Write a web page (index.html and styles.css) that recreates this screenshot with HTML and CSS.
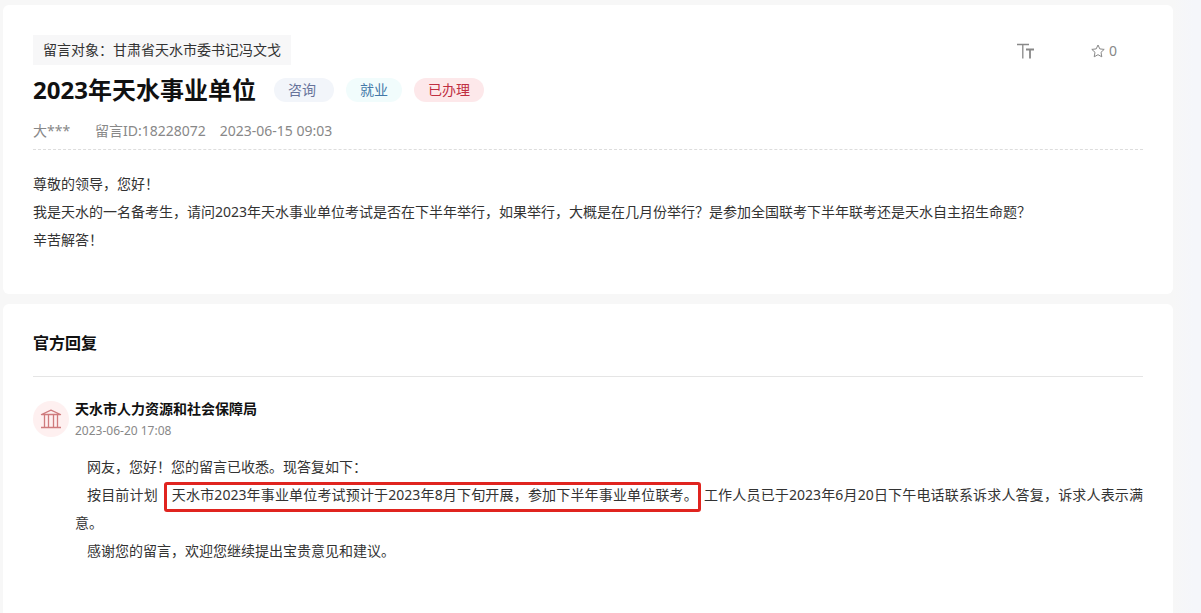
FILE: index.html
```
<!DOCTYPE html>
<html lang="zh-CN">
<head>
<meta charset="utf-8">
<meta name="viewport" content="width=device-width, initial-scale=1">
<title>2023年天水事业单位</title>
<link rel="stylesheet" href="styles.css">
</head>
<body>
<main class="page">
  <article class="card">
    <div class="card-top">
      <p class="target">留言对象：甘肃省天水市委书记冯文戈</p>
      <div class="actions">
        <button class="action" type="button" aria-label="字体大小">
          <svg width="18" height="16" viewBox="0 0 18 16" fill="none" stroke="currentColor" stroke-width="1.3" aria-hidden="true">
            <path d="M0 1.5H12M5.8 1.5V15.5"/>
            <path d="M9 6.5H17M13 6.5V15.5" stroke-width="1.8"/>
          </svg>
        </button>
        <button class="action action-star" type="button" aria-label="收藏 0">
          <svg width="14" height="14" viewBox="0 0 14 14" fill="none" stroke="currentColor" stroke-linejoin="round" aria-hidden="true">
            <path d="M7 1L8.8 4.9L13.2 5.4L10 8.3L10.8 12.8L7 10.7L3.2 12.8L4 8.3L.8 5.4L5.2 4.9Z"/>
          </svg>
          <span>0</span>
        </button>
      </div>
    </div>
    <div class="title-row">
      <h1 class="title">2023年天水事业单位</h1>
      <div class="tags">
        <span class="tag tag-type">咨询</span>
        <span class="tag tag-field">就业</span>
        <span class="tag tag-status">已办理</span>
      </div>
    </div>
    <div class="meta">
      <span class="author">大***</span>
      <span>留言ID:18228072</span>
      <time datetime="2023-06-15T09:03">2023-06-15 09:03</time>
    </div>
    <div class="message">
      <p>尊敬的领导，您好！</p>
      <p>我是天水的一名备考生，请问2023年天水事业单位考试是否在下半年举行，如果举行，大概是在几月份举行？是参加全国联考下半年联考还是天水自主招生命题？</p>
      <p>辛苦解答！</p>
    </div>
  </article>
  <section class="card card-reply">
    <h2 class="section-title">官方回复</h2>
    <div class="reply">
      <span class="avatar">
        <svg width="22" height="20" viewBox="0 0 22 20" fill="none" stroke="currentColor" stroke-width="1.3" stroke-linejoin="round" aria-hidden="true">
          <path d="M1.5 5.5L11 1.2L20.5 5.5ZM1 18.5H21M4.5 5.5V18.5M8.5 5.5V18.5M13.5 5.5V18.5M17.5 5.5V18.5"/>
        </svg>
      </span>
      <div class="reply-main">
        <h3 class="office">天水市人力资源和社会保障局</h3>
        <time class="reply-time" datetime="2023-06-20T17:08">2023-06-20 17:08</time>
        <div class="reply-text">
          <p>网友，您好！您的留言已收悉。现答复如下：</p>
          <p>按目前计划<mark class="highlight">天水市2023年事业单位考试预计于2023年8月下旬开展，参加下半年事业单位联考。</mark>工作人员已于2023年6月20日下午电话联系诉求人答复，诉求人表示满意。</p>
          <p>感谢您的留言，欢迎您继续提出宝贵意见和建议。</p>
        </div>
      </div>
    </div>
  </section>
</main>
</body>
</html>
```
FILE: styles.css
```
* {
  box-sizing: border-box;
}

body,
h1,
h2,
h3,
p {
  margin: 0;
}

body {
  background: linear-gradient(to right, #f7f7f7 calc(100% - 28px), #f5f6fa calc(100% - 8px));
  color: #333;
  font-family: "Noto Sans", "Noto Sans CJK SC", sans-serif;
  font-size: 14px;
  line-height: 28px;
}

.page {
  display: flex;
  flex-direction: column;
  gap: 10px;
  min-height: 100vh;
  padding: 5px 28px 0 3px;
}

.card {
  padding: 30px 30px 40px;
  border-radius: 6px;
  background: #fff;
}

.card-top {
  display: flex;
  justify-content: space-between;
  align-items: center;
}

.target {
  padding: 0 10px;
  background: #f7f7f8;
  line-height: 30px;
}

.actions {
  display: flex;
  gap: 56px;
  margin-right: 26px;
  padding-top: 2px;
}

.action {
  display: flex;
  align-items: center;
  gap: 4px;
  padding: 0;
  border: 0;
  background: none;
  color: #888;
  font: inherit;
  line-height: 28px;
  cursor: pointer;
}

.title-row {
  display: flex;
  align-items: center;
  gap: 18px;
  line-height: 50px;
}

.title {
  color: #111;
  font-size: 24px;
  font-weight: 700;
  line-height: 50px;
}

.tags {
  display: flex;
  gap: 12px;
  line-height: 24px;
}

.tag {
  padding: 0 14px;
  border-radius: 12px;
}

.tag-type {
  padding-right: 18px;
  background: #f2f5fa;
  color: #67739a;
}

.tag-field {
  background: #f1fcfc;
  color: #4479a8;
}

.tag-status {
  background: #fde8ea;
  color: #c02f42;
}

.meta {
  display: flex;
  gap: 14px;
  padding: 2px 0 4px;
  border-bottom: 1px dashed #ddd;
  color: #888;
}

.author {
  min-width: 48px;
}

.message {
  padding-top: 20px;
}

.card-reply {
  flex: 1;
  padding-top: 22px;
  border-radius: 6px 6px 0 0;
}

.section-title {
  padding-bottom: 16px;
  border-bottom: 1px solid #e5e5e5;
  color: #111;
  font-size: 16px;
  font-weight: 700;
  line-height: 34px;
}

.reply {
  display: flex;
  gap: 6px;
  padding-top: 24px;
}

.avatar {
  display: flex;
  flex: none;
  align-items: center;
  justify-content: center;
  width: 36px;
  height: 36px;
  border-radius: 50%;
  background: #fef0f0;
  color: #cf7b7d;
}

.reply-main {
  flex: 1;
}

.office {
  color: #111;
  font-size: 14px;
  font-weight: 700;
  line-height: 16px;
}

.reply-time {
  display: block;
  color: #888;
  font-size: 12px;
  line-height: 28px;
}

.reply-text {
  padding-top: 8px;
  text-align: justify;
}

.reply-text p {
  text-indent: 12px;
}

.highlight {
  margin: 0 3px 0 6px;
  padding: 0 0 5px 5px;
  border: 3px solid #e0241f;
  border-radius: 3px;
  background: none;
  color: inherit;
}
```
